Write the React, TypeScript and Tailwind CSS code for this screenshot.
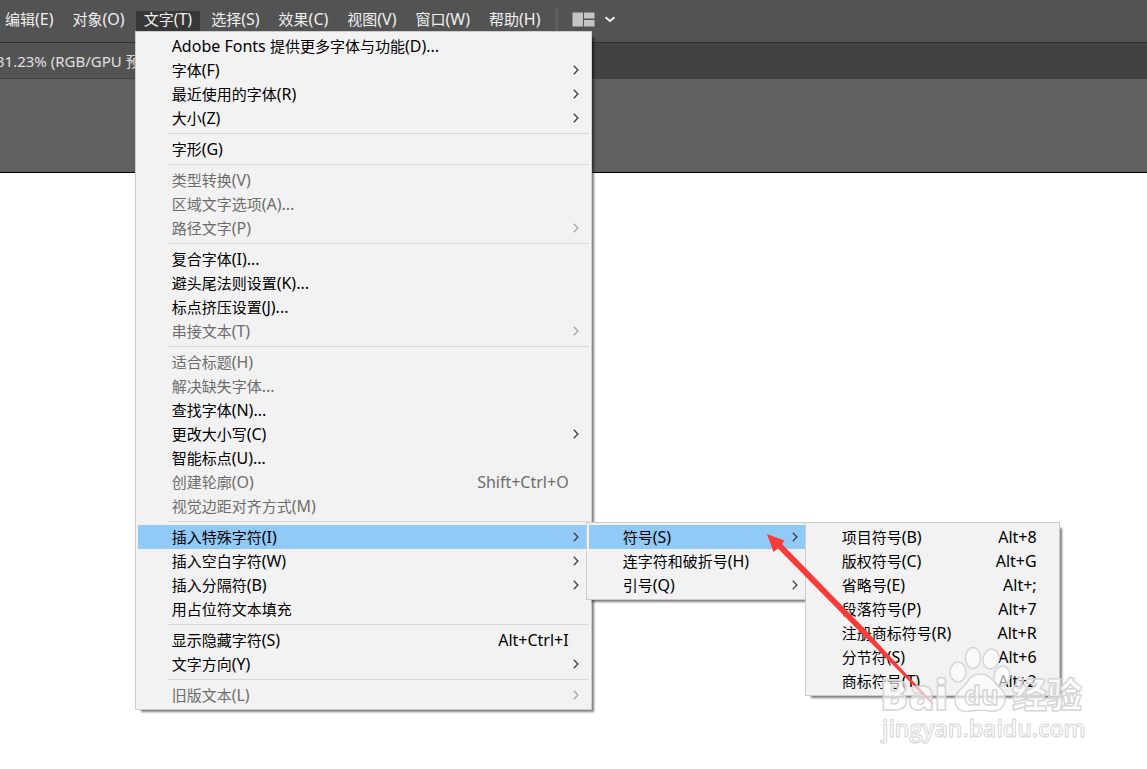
import { useState } from 'react';

interface MenuItem {
  label: string;
  shortcut?: string;
  disabled?: boolean;
  arrow?: boolean;
  children?: MenuItem[][];
}

const menuBar = [
  '编辑(E)',
  '对象(O)',
  '文字(T)',
  '选择(S)',
  '效果(C)',
  '视图(V)',
  '窗口(W)',
  '帮助(H)',
];

const symbolMenu: MenuItem[][] = [
  [
    { label: '项目符号(B)', shortcut: 'Alt+8' },
    { label: '版权符号(C)', shortcut: 'Alt+G' },
    { label: '省略号(E)', shortcut: 'Alt+;' },
    { label: '段落符号(P)', shortcut: 'Alt+7' },
    { label: '注册商标符号(R)', shortcut: 'Alt+R' },
    { label: '分节符(S)', shortcut: 'Alt+6' },
    { label: '商标符号(T)', shortcut: 'Alt+2' },
  ],
];

const specialCharMenu: MenuItem[][] = [
  [
    { label: '符号(S)', arrow: true, children: symbolMenu },
    { label: '连字符和破折号(H)' },
    { label: '引号(Q)', arrow: true },
  ],
];

// each inner array is a group, groups are split by a line
const typeMenu: MenuItem[][] = [
  [
    { label: 'Adobe Fonts 提供更多字体与功能(D)...' },
    { label: '字体(F)', arrow: true },
    { label: '最近使用的字体(R)', arrow: true },
    { label: '大小(Z)', arrow: true },
  ],
  [{ label: '字形(G)' }],
  [
    { label: '类型转换(V)', disabled: true },
    { label: '区域文字选项(A)...', disabled: true },
    { label: '路径文字(P)', disabled: true, arrow: true },
  ],
  [
    { label: '复合字体(I)...' },
    { label: '避头尾法则设置(K)...' },
    { label: '标点挤压设置(J)...' },
    { label: '串接文本(T)', disabled: true, arrow: true },
  ],
  [
    { label: '适合标题(H)', disabled: true },
    { label: '解决缺失字体...', disabled: true },
    { label: '查找字体(N)...' },
    { label: '更改大小写(C)', arrow: true },
    { label: '智能标点(U)...' },
    { label: '创建轮廓(O)', disabled: true, shortcut: 'Shift+Ctrl+O' },
    { label: '视觉边距对齐方式(M)', disabled: true },
  ],
  [
    { label: '插入特殊字符(I)', arrow: true, children: specialCharMenu },
    { label: '插入空白字符(W)', arrow: true },
    { label: '插入分隔符(B)', arrow: true },
    { label: '用占位符文本填充' },
  ],
  [
    { label: '显示隐藏字符(S)', shortcut: 'Alt+Ctrl+I' },
    { label: '文字方向(Y)', arrow: true },
  ],
  [{ label: '旧版文本(L)', disabled: true, arrow: true }],
];

// latin runs are set one step larger than the chinese ones
function Label({ text }: { text: string }) {
  const runs = text.match(/[\u4e00-\u9fff]+|[^\u4e00-\u9fff]+/g) ?? [];

  return (
    <span className="whitespace-pre">
      {runs.map((run, i) => (
        <span key={i} className={/[\u4e00-\u9fff]/.test(run) ? 'text-[15px]' : 'text-[16px]'}>
          {run}
        </span>
      ))}
    </span>
  );
}

function Arrow({ disabled }: { disabled?: boolean }) {
  return (
    <svg width="6" height="10" viewBox="0 0 6 10" fill="none" className="ml-auto mr-[10px] shrink-0">
      <path d="M0.8 0.8L4.9 5L0.8 9.2" stroke={disabled ? '#a5a5a5' : '#404040'} strokeWidth="1.3" />
    </svg>
  );
}

function MenuRow({ item }: { item: MenuItem }) {
  const open = !!item.children;

  return (
    <li className="relative">
      <button
        disabled={item.disabled}
        className={`flex w-full h-6 items-center pl-[34px] text-left whitespace-nowrap ${
          open ? 'bg-[#91c9f7]' : 'enabled:hover:bg-[#91c9f7]'
        } ${item.disabled ? 'text-[#6d6d6d]' : 'text-black'}`}
      >
        <Label text={item.label} />
        {item.shortcut && <span className="ml-auto mr-5 text-[16px]">{item.shortcut}</span>}
        {item.arrow && <Arrow disabled={item.disabled} />}
      </button>
      {item.children && (
        <Menu
          groups={item.children}
          className={`left-full -top-[3px] -ml-[3px] ${item.children === symbolMenu ? 'w-[255px]' : 'w-[225px]'}`}
        />
      )}
    </li>
  );
}

function Menu({ groups, className }: { groups: MenuItem[][]; className: string }) {
  return (
    <div
      className={`absolute z-10 border border-[#cccccc] bg-[#f2f2f2] p-[2px] leading-5 shadow-[4px_4px_2px_-2px_rgba(0,0,0,0.5)] ${className}`}
    >
      {groups.map((group, i) => (
        <div key={i}>
          {i > 0 && <hr className="my-[3px] ml-[30px] border-[#d7d7d7]" />}
          <ul>
            {group.map((item) => (
              <MenuRow key={item.label} item={item} />
            ))}
          </ul>
        </div>
      ))}
    </div>
  );
}

function Watermark() {
  return (
    <svg
      width="212"
      height="104"
      viewBox="0 0 212 104"
      className="pointer-events-none absolute left-[877px] top-[644px] z-20"
      fill="#ffffff"
      fillOpacity="0.6"
      stroke="#d6d6d6"
      strokeWidth="1.5"
      fontFamily="'Open Sans', 'Noto Sans CJK SC', sans-serif"
    >
      <text x="3" y="66" fontSize="42" fontWeight="800">Bai</text>
      <ellipse cx="81" cy="28" rx="8" ry="10" />
      <ellipse cx="96" cy="14" rx="7.5" ry="10.5" />
      <ellipse cx="114" cy="15" rx="8" ry="10" transform="rotate(12 114 15)" />
      <ellipse cx="125" cy="32" rx="8" ry="10" transform="rotate(12 125 32)" />
      <path d="M103 30C113 30 115 36 120 41C126 46 129 50 128 57C127 65 120 68 113 67C106 66 100 66 93 67C85 69 79 65 78 58C77 50 83 46 88 41C92 36 94 30 103 30Z" />
      <text x="87" y="61" fontSize="27" fontWeight="700">du</text>
      <text x="135" y="64" fontSize="35" fontWeight="900">经验</text>
      <text x="5" y="93" fontSize="23" fontWeight="600" strokeWidth="1">jingyan.baidu.com</text>
    </svg>
  );
}

function Pointer() {
  return (
    <svg
      width="170"
      height="172"
      viewBox="0 0 170 172"
      className="pointer-events-none absolute left-[765px] top-[533px] z-20"
    >
      <path d="M2 1L19.5 7.5L17 11L98 94L168 170L166.5 170.5L93 97L13 15.5L8.5 19Z" fill="#fb3a3a" />
    </svg>
  );
}

export default function App() {
  const [active] = useState('文字(T)');

  return (
    <div
      className="relative flex min-h-screen flex-col overflow-hidden bg-white text-[15px] leading-5"
      style={{ fontFamily: "'Noto Sans', 'Noto Sans CJK SC', sans-serif" }}
    >
      {/* Menu bar */}
      <header className="flex h-[43px] items-start border-b border-[#303030] bg-[#535353] pt-[11px] text-[#f0f0f0]">
        <nav className="-ml-[3px] flex gap-[3px]">
          {menuBar.map((name) => (
            <div key={name} className="relative">
              <button
                className={`block h-5 px-2 pb-1 leading-4 whitespace-nowrap ${name === active ? 'bg-[#383838]' : ''}`}
              >
                <Label text={name} />
              </button>
              {name === active && <Menu groups={typeMenu} className="top-full -left-px w-[457px]" />}
            </div>
          ))}
        </nav>
        <div className="-mt-[3px] ml-[6px] h-6 w-[3px] bg-[#5f5f5f]" />
        <button aria-label="workspace layout" className="ml-[14px] flex h-4 items-center gap-[9px]">
          <svg width="23" height="15" viewBox="0 0 23 15" fill="#c4c4c4">
            <rect x="0.5" y="0.5" width="10.5" height="14" />
            <rect x="12" y="0.5" width="10.5" height="6" />
            <rect x="12" y="8" width="10.5" height="6.5" />
          </svg>
          <svg width="12" height="7" viewBox="0 0 12 7" fill="none">
            <path d="M1.5 1.2L6 5L10.5 1.2" stroke="#f0f0f0" strokeWidth="1.9" />
          </svg>
        </button>
      </header>

      {/* Document tabs */}
      <div className="flex h-9 border-b border-[#404040] bg-[#424242]">
        <button className="-ml-1 w-52 overflow-hidden bg-[#535353] text-left text-[#e0e0e0] whitespace-nowrap">
          31.23% (RGB/GPU 预览)
        </button>
      </div>

      {/* Pasteboard around the artboard */}
      <div className="h-[94px] border-b border-black bg-[#606060]" />
      <main className="flex-1 bg-white" />

      <Pointer />
      <Watermark />
    </div>
  );
}
